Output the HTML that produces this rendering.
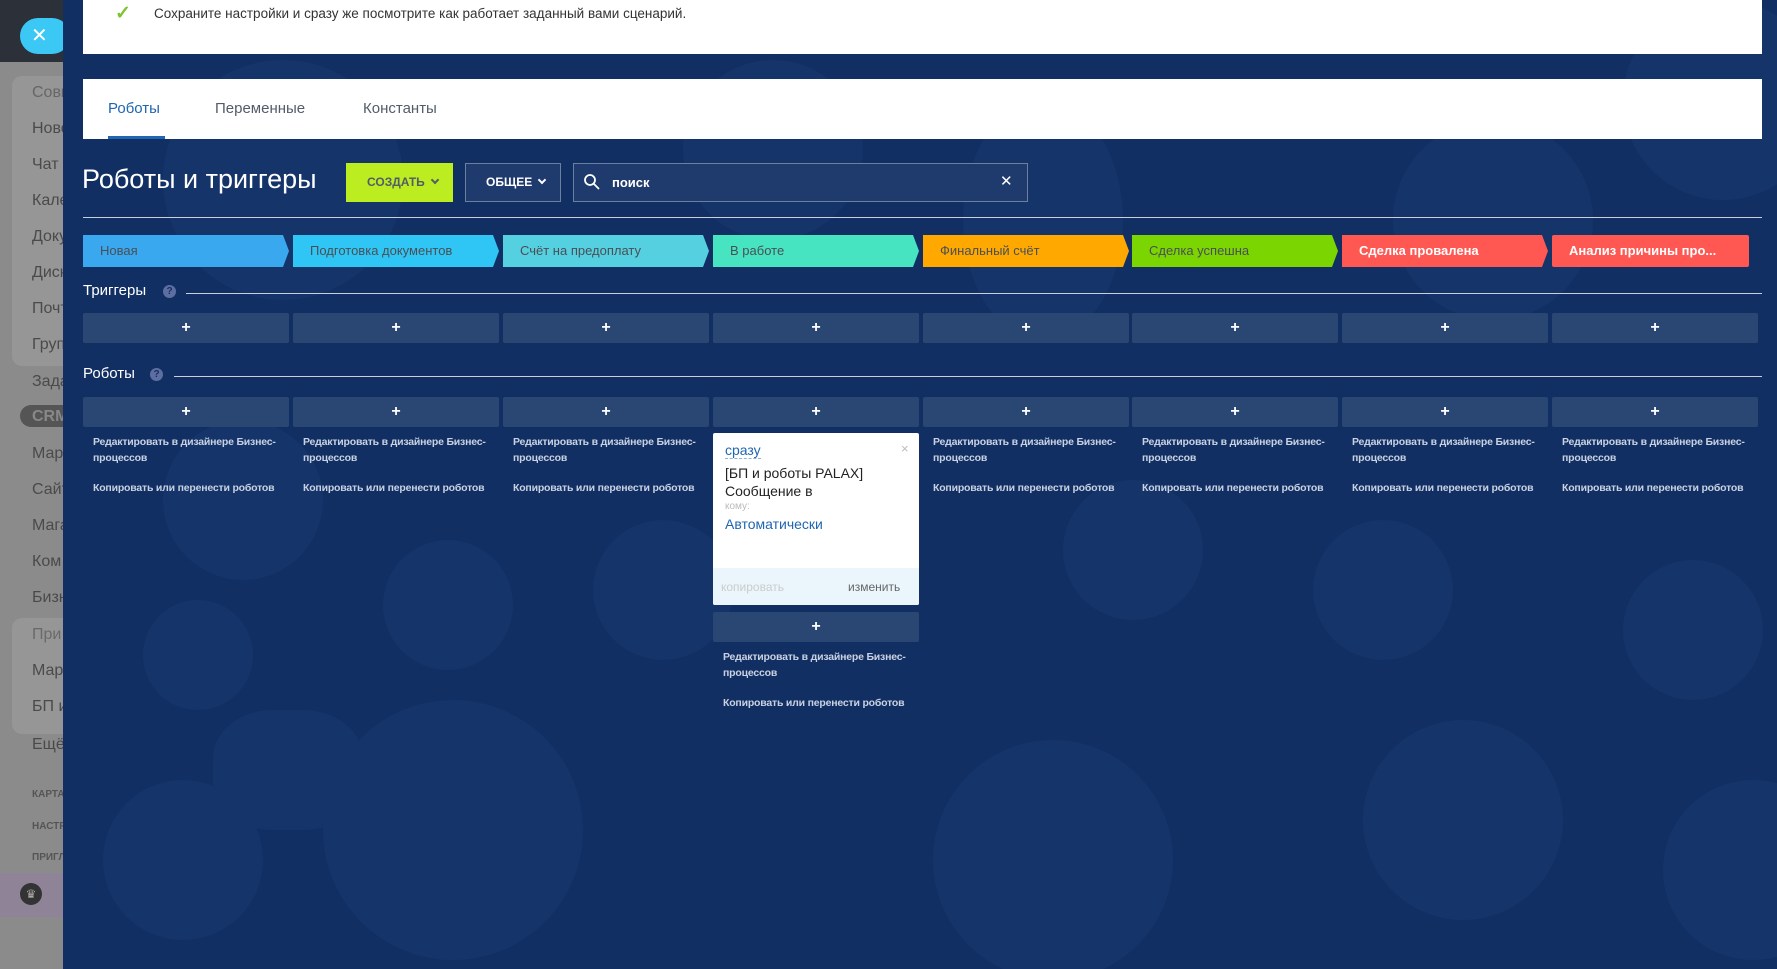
<!DOCTYPE html>
<html><head><meta charset="utf-8"><style>
*{margin:0;padding:0;box-sizing:border-box}
body{width:1777px;height:969px;overflow:hidden;background:#123063;font-family:"Liberation Sans",sans-serif;position:relative}
.abs{position:absolute}
#side{left:0;top:0;width:63px;height:969px;background:#8b8b8b;overflow:hidden}
#side .top{left:0;top:0;width:63px;height:62px;background:#2c3038}
#side .it{position:absolute;left:32px;font-size:16px;color:#4a4a4a;white-space:nowrap}
#side .sm{position:absolute;left:32px;font-size:10px;font-weight:bold;color:#555;white-space:nowrap}
#main{left:63px;top:0;width:1714px;height:969px;background:#122f63;overflow:hidden}
.bot{position:absolute;border-radius:50%;background:#15346a}
.stage{position:absolute;top:235px;height:32px;font-size:13px;line-height:32px;padding-left:17px;white-space:nowrap;color:#4a4f55}
.btn{position:absolute;height:30px;background:#2a4672;border-radius:2px;color:#fff;text-align:center;font-size:16px;font-weight:bold;line-height:29px}
.lnk{position:absolute;font-size:10.5px;color:#c9d2e2;line-height:16px;font-weight:bold;letter-spacing:-0.2px}
.chev{display:inline-block;width:6px;height:6px;border-right:2px solid currentColor;border-bottom:2px solid currentColor;transform:rotate(45deg);margin-left:7px;position:relative;top:-3px}
</style></head><body>
<div id="side" class="abs">
 <div class="abs top"></div>
 <div class="abs" style="left:20px;top:18px;width:50px;height:36px;border-radius:18px;background:#3bc8f5;color:#fff;font-size:20px;line-height:36px;padding-left:11px">✕</div>
 <div class="abs" style="left:12px;top:76px;width:60px;height:290px;border-radius:10px;background:#969696"></div>
 <div class="abs" style="left:12px;top:618px;width:60px;height:116px;border-radius:10px;background:#969696"></div>
 <div class="it" style="top:84px;color:#666">Совм</div>
 <div class="it" style="top:120px">Ново</div>
 <div class="it" style="top:156px">Чат</div>
 <div class="it" style="top:192px">Кале</div>
 <div class="it" style="top:228px">Доку</div>
 <div class="it" style="top:264px">Диск</div>
 <div class="it" style="top:300px">Почт</div>
 <div class="it" style="top:336px">Груп</div>
 <div class="it" style="top:373px">Зада</div>
 <div class="abs" style="left:20px;top:405px;width:60px;height:22px;border-radius:11px;background:#555"></div>
 <div class="it" style="top:408px;color:#888;font-weight:bold">CRM</div>
 <div class="it" style="top:445px">Мар</div>
 <div class="it" style="top:481px">Сайт</div>
 <div class="it" style="top:517px">Мага</div>
 <div class="it" style="top:553px">Ком</div>
 <div class="it" style="top:589px">Бизн</div>
 <div class="it" style="top:626px;color:#6a6a6a">При</div>
 <div class="it" style="top:662px">Мар</div>
 <div class="it" style="top:698px">БП и</div>
 <div class="it" style="top:736px">Ещё</div>
 <div class="sm" style="top:789px">КАРТА</div>
 <div class="sm" style="top:821px">НАСТР</div>
 <div class="sm" style="top:852px">ПРИГЛ</div>
 <div class="abs" style="left:0;top:873px;width:63px;height:44px;background:#8f8497"></div>
 <div class="abs" style="left:20px;top:883px;width:22px;height:22px;border-radius:50%;background:#333;color:#aaa;font-size:12px;text-align:center;line-height:22px">♛</div>
</div>
<div id="main" class="abs">
 <div class="bot" style="left:100px;top:60px;width:240px;height:240px"></div>
 <div class="bot" style="left:100px;top:420px;width:160px;height:160px"></div>
 <div class="bot" style="left:40px;top:780px;width:160px;height:160px"></div>
 <div class="bot" style="left:150px;top:710px;width:150px;height:120px;border-radius:40%"></div>
 <div class="bot" style="left:80px;top:600px;width:110px;height:110px"></div>
 <div class="bot" style="left:320px;top:540px;width:130px;height:130px"></div>
 <div class="bot" style="left:260px;top:700px;width:260px;height:260px"></div>
 <div class="bot" style="left:530px;top:520px;width:140px;height:140px"></div>
 <div class="bot" style="left:900px;top:100px;width:160px;height:240px"></div>
 <div class="bot" style="left:1000px;top:480px;width:140px;height:140px"></div>
 <div class="bot" style="left:870px;top:740px;width:240px;height:240px"></div>
 <div class="bot" style="left:1250px;top:520px;width:140px;height:140px"></div>
 <div class="bot" style="left:1300px;top:720px;width:200px;height:200px"></div>
 <div class="bot" style="left:1330px;top:120px;width:200px;height:200px"></div>
 <div class="bot" style="left:1560px;top:560px;width:140px;height:140px"></div>
 <div class="bot" style="left:1560px;top:0px;width:200px;height:200px"></div>
 <div class="bot" style="left:1600px;top:780px;width:180px;height:180px"></div>
 <div class="bot" style="left:620px;top:60px;width:180px;height:180px"></div>

 <div class="abs" style="left:20px;top:0;width:1679px;height:54px;background:#fff"></div>
 <div class="abs" style="left:52px;top:2px;color:#7fc42e;font-size:19px;font-weight:bold">✓</div>
 <div class="abs" style="left:91px;top:6px;font-size:13.5px;color:#333">Сохраните настройки и сразу же посмотрите как работает заданный вами сценарий.</div>

 <div class="abs" style="left:20px;top:79px;width:1679px;height:60px;background:#fff"></div>
 <div class="abs" style="left:45px;top:100px;font-size:15px;color:#2066b0">Роботы</div>
 <div class="abs" style="left:45px;top:136px;width:57px;height:3px;background:#2066b0"></div>
 <div class="abs" style="left:152px;top:100px;font-size:15px;color:#535c69">Переменные</div>
 <div class="abs" style="left:300px;top:100px;font-size:15px;color:#535c69">Константы</div>

 <div class="abs" style="left:19px;top:164px;font-size:27px;color:#fff">Роботы и триггеры</div>
 <div class="abs" style="left:283px;top:163px;width:107px;height:39px;background:#bbed21;color:#535c69;font-size:12px;font-weight:bold;line-height:39px;padding-left:21px">СОЗДАТЬ<span class="chev"></span></div>
 <div class="abs" style="left:402px;top:163px;width:96px;height:39px;border:1px solid #6b7f9f;background:#1f3a6c;color:#fff;font-size:12px;font-weight:bold;line-height:37px;padding-left:20px">ОБЩЕЕ<span class="chev"></span></div>
 <div class="abs" style="left:510px;top:163px;width:455px;height:39px;border:1px solid #6b7f9f;background:#1f3a6c;color:#fff;font-size:13px;font-weight:bold;line-height:37px;padding-left:38px">поиск</div>
 <svg class="abs" style="left:520px;top:173px" width="18" height="18"><circle cx="7" cy="7" r="5" fill="none" stroke="#fff" stroke-width="1.8"/><line x1="11" y1="11" x2="16" y2="16" stroke="#fff" stroke-width="1.8"/></svg>
 <div class="abs" style="left:937px;top:172px;color:#fff;font-size:15px">✕</div>
 <div class="abs" style="left:20px;top:217px;width:1679px;height:1px;background:#c8d0e0"></div>

 <div class="stage" style="left:20px;width:206px;background:#39a8ef;clip-path:polygon(0 0,200px 0,206px 50%,200px 100%,0 100%)">Новая</div>
 <div class="stage" style="left:230px;width:206px;background:#2fc6f6;clip-path:polygon(0 0,200px 0,206px 50%,200px 100%,0 100%)">Подготовка документов</div>
 <div class="stage" style="left:440px;width:206px;background:#55d0e0;clip-path:polygon(0 0,200px 0,206px 50%,200px 100%,0 100%)">Счёт на предоплату</div>
 <div class="stage" style="left:650px;width:206px;background:#47e4c2;clip-path:polygon(0 0,200px 0,206px 50%,200px 100%,0 100%)">В работе</div>
 <div class="stage" style="left:860px;width:206px;background:#ffa900;clip-path:polygon(0 0,200px 0,206px 50%,200px 100%,0 100%)">Финальный счёт</div>
 <div class="stage" style="left:1069px;width:206px;background:#7bd500;clip-path:polygon(0 0,200px 0,206px 50%,200px 100%,0 100%)">Сделка успешна</div>
 <div class="stage" style="left:1279px;width:206px;background:#ff5752;color:#fff;font-weight:bold;clip-path:polygon(0 0,200px 0,206px 50%,200px 100%,0 100%)">Сделка провалена</div>
 <div class="stage" style="left:1489px;width:197px;background:#ff5752;color:#fff;font-weight:bold;border-radius:2px">Анализ причины про...</div>

 <div class="abs" style="left:20px;top:282px;font-size:15px;color:#fff">Триггеры</div>
 <div class="abs" style="left:100px;top:285px;width:13px;height:13px;border-radius:50%;background:#5d6ea3;color:#1a2f60;font-size:10px;text-align:center;line-height:13px;font-weight:bold">?</div>
 <div class="abs" style="left:123px;top:293px;width:1576px;height:1px;background:#c8d0e0"></div>

 <div class="abs" style="left:20px;top:365px;font-size:15px;color:#fff">Роботы</div>
 <div class="abs" style="left:87px;top:368px;width:13px;height:13px;border-radius:50%;background:#5d6ea3;color:#1a2f60;font-size:10px;text-align:center;line-height:13px;font-weight:bold">?</div>
 <div class="abs" style="left:111px;top:376px;width:1588px;height:1px;background:#c8d0e0"></div>

 <div id="cols"></div>

 <div class="abs" style="left:650px;top:433px;width:206px;height:172px;background:#fff;border-radius:2px"></div>
 <div class="abs" style="left:650px;top:568px;width:206px;height:37px;background:#eaf6fb;border-radius:0 0 2px 2px"></div>
 <div class="abs" style="left:662px;top:442px;font-size:14px;color:#2066b0;border-bottom:1px dashed #8fb3da">сразу</div>
 <div class="abs" style="left:838px;top:441px;font-size:13px;color:#bbb">×</div>
 <div class="abs" style="left:662px;top:464px;font-size:14px;color:#222;line-height:18px">[БП и роботы PALAX]<br>Сообщение в</div>
 <div class="abs" style="left:662px;top:501px;font-size:10px;color:#bbb">кому:</div>
 <div class="abs" style="left:662px;top:516px;font-size:14px;color:#2066b0">Автоматически</div>
 <div class="abs" style="left:658px;top:580px;font-size:12px;color:#ccc">копировать</div>
 <div class="abs" style="left:785px;top:580px;font-size:12px;color:#666">изменить</div>
 <div class="btn" style="left:650px;top:612px;width:206px">+</div>
 <div class="lnk" style="left:660px;top:649px">Редактировать в дизайнере Бизнес-<br>процессов</div>
 <div class="lnk" style="left:660px;top:695px">Копировать или перенести роботов</div>
</div>
<script>
var h='',L=[20,230,440,650,860,1069,1279,1489];
for(var i=0;i<8;i++){var x=L[i];
h+='<div class="btn" style="left:'+x+'px;top:313px;width:206px">+</div>';
h+='<div class="btn" style="left:'+x+'px;top:397px;width:206px">+</div>';
if(i!=3){h+='<div class="lnk" style="left:'+(x+10)+'px;top:434px">Редактировать в дизайнере Бизнес-<br>процессов</div>';
h+='<div class="lnk" style="left:'+(x+10)+'px;top:480px">Копировать или перенести роботов</div>';}}
document.getElementById('cols').outerHTML=h;
</script>
</body></html>
